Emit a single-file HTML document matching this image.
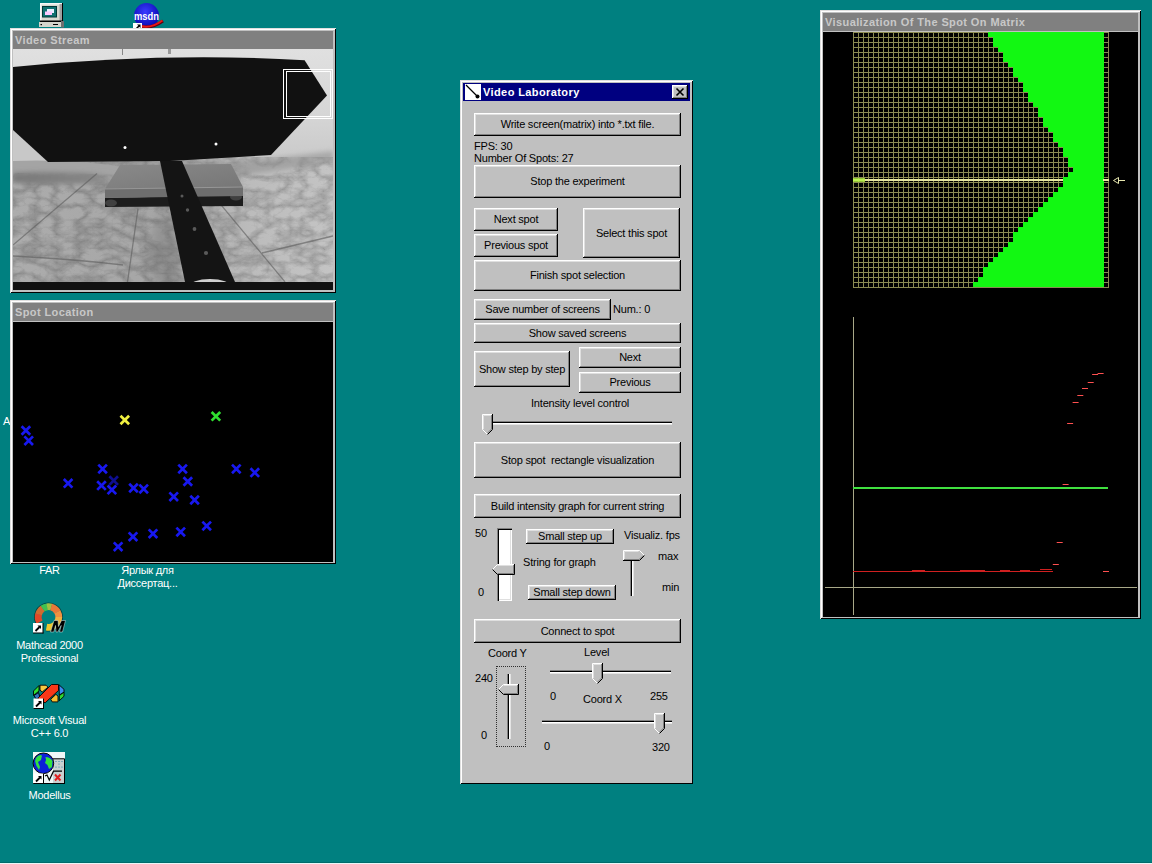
<!DOCTYPE html><html><head><meta charset="utf-8"><style>
*{box-sizing:border-box}
html,body{margin:0;padding:0}
body{width:1152px;height:864px;background:#008080;position:relative;overflow:hidden;font-family:"Liberation Sans",sans-serif;font-size:11px;color:#000}
.a{position:absolute}
.win{position:absolute;background:#c0c0c0;box-shadow:inset 1px 1px #dfdfdf,inset -1px -1px #000,inset 2px 2px #fff,inset -2px -2px #c0c0c0}
.tb{position:absolute;height:18px;background:#808080;color:#c8c8c8;font-weight:bold;font-size:11px;line-height:18px;padding-left:2px;white-space:nowrap;letter-spacing:0.4px}
.tba{background:#000080;color:#fff}
.btn{position:absolute;background:#c0c0c0;box-shadow:inset -1px -1px #000,inset 1px 1px #fff,inset -2px -2px #808080,inset 2px 2px #dfdfdf;text-align:center;white-space:nowrap;font-size:11px;letter-spacing:-0.22px}
.t{position:absolute;white-space:nowrap;font-size:11px;line-height:13px;letter-spacing:-0.2px}
.dl{position:absolute;color:#fff;font-size:11px;line-height:13px;text-align:center;white-space:nowrap;letter-spacing:-0.25px}
</style></head><body>
<svg class="a" style="left:34px;top:0px" width="36" height="30" viewBox="0 0 36 30">
<rect x="6" y="3" width="22" height="18" fill="#d8d8d0"/>
<rect x="6" y="3" width="22" height="1.5" fill="#f8f8f8"/>
<rect x="6" y="3" width="1.5" height="18" fill="#f8f8f8"/>
<rect x="25.5" y="4" width="2.5" height="17" fill="#a0a0a0"/>
<rect x="28" y="3" width="1" height="19" fill="#000"/>
<rect x="8" y="6" width="15" height="11.5" fill="#003838"/>
<rect x="9" y="7" width="13" height="9.5" fill="#107070"/>
<rect x="13" y="9" width="7" height="4" fill="#e8f0ff"/>
<rect x="11" y="11.5" width="7" height="3.5" fill="#ffc8ff"/>
<rect x="6" y="20.5" width="23" height="1.5" fill="#000"/>
<rect x="5" y="22" width="24" height="5" fill="#d4d4cc"/>
<rect x="27" y="21" width="3" height="6.5" fill="#707070"/>
<rect x="6.5" y="24" width="1.5" height="1.2" fill="#000"/>
<rect x="19" y="24" width="5" height="1" fill="#000"/>
</svg>
<svg class="a" style="left:130px;top:0px" width="36" height="30" viewBox="0 0 36 30">
<defs><radialGradient id="msg" cx="0.45" cy="0.35" r="0.65"><stop offset="0" stop-color="#3a3aff"/><stop offset="1" stop-color="#0808b0"/></radialGradient></defs>
<circle cx="16.5" cy="15.5" r="12.5" fill="url(#msg)"/>
<path d="M9 26 Q20 30 33 21" stroke="#600010" stroke-width="3.2" fill="none"/>
<path d="M9 25.5 Q20 29.5 32.5 20.5" stroke="#e81818" stroke-width="2" fill="none"/>
<text x="16.5" y="19.5" text-anchor="middle" font-family="Liberation Sans" font-weight="bold" font-size="11.5" fill="#fff" textLength="25" lengthAdjust="spacingAndGlyphs">msdn</text>
<rect x="3" y="23" width="9" height="7" fill="#fff"/>
<path d="M5.5 29.5 L9 26" stroke="#000" stroke-width="1.6"/><path d="M7 24.5 L10.5 24.5 L10.5 28 Z" fill="#000"/>
</svg>
<div class="t" style="left:3px;top:415px;"><span style="color:#fff">A</span></div>
<div class="dl" style="left:-10.5px;width:120px;top:564px">FAR</div>
<div class="dl" style="left:87.5px;width:120px;top:564px">Ярлык для</div>
<div class="dl" style="left:87.5px;width:120px;top:577px">Диссертац...</div>
<svg class="a" style="left:30px;top:600px" width="38" height="36" viewBox="0 0 38 36"><path d="M7.85 25.93 A13.9 13.9 0 1 1 16.09 30.69" stroke="#004848" stroke-width="1.2" fill="none"/><path d="M9.58 22.15 A10.3 10.3 0 0 1 8.60 14.16" stroke="#e04828" stroke-width="6.8" fill="none"/><path d="M8.55 14.33 A10.3 10.3 0 0 1 12.74 8.46" stroke="#d06a30" stroke-width="6.8" fill="none"/><path d="M12.59 8.56 A10.3 10.3 0 0 1 17.24 6.78" stroke="#40c050" stroke-width="6.8" fill="none"/><path d="M17.07 6.80 A10.3 10.3 0 0 1 21.34 7.10" stroke="#a0c040" stroke-width="6.8" fill="none"/><path d="M21.17 7.05 A10.3 10.3 0 0 1 27.51 12.01" stroke="#e87838" stroke-width="6.8" fill="none"/><path d="M27.42 11.85 A10.3 10.3 0 0 1 28.80 17.18" stroke="#f09040" stroke-width="6.8" fill="none"/><path d="M28.80 17.00 A10.3 10.3 0 0 1 27.33 22.30" stroke="#f0b040" stroke-width="6.8" fill="none"/><path d="M27.42 22.15 A10.3 10.3 0 0 1 16.53 27.11" stroke="#f0c830" stroke-width="6.8" fill="none"/><path d="M20.5 32 L24 20.5 L28 20.5 L28.5 26.5 L31.5 20.5 L35.5 20.5 L32.5 32 L29.5 32 L31.2 25.5 L27.8 32 L26 32 L25.5 25.5 L23.8 32 Z" fill="#000" stroke="#d8f0f0" stroke-width="0.5"/><rect x="3" y="23" width="10" height="10" fill="#fff"/><rect x="3" y="32.5" width="10.5" height="1" fill="#000"/><rect x="12.5" y="23" width="1" height="10.5" fill="#000"/>
<path d="M5.5 31 L9.5 27" stroke="#000" stroke-width="1.8"/><path d="M7.5 25.5 L11 25.5 L11 29 Z" fill="#000"/></svg>
<div class="dl" style="left:-10.5px;width:120px;top:639px">Mathcad 2000</div>
<div class="dl" style="left:-10.5px;width:120px;top:652px">Professional</div>
<svg class="a" style="left:30px;top:680px" width="38" height="32" viewBox="0 0 38 32">
<g stroke="#000" stroke-width="0.9" stroke-linejoin="round">
<path d="M3.5 11 L9 5.5 L9 11 L3.5 15.5 Z" fill="#30e030"/>
<path d="M10 5.2 L16 5.2 L18 7.2 L12.2 12 L10 10 Z" fill="#f8c840"/>
<path d="M29 4.8 L34 9.3 L34 12.2 L29.3 15 Z" fill="#3c8cf0"/>
<path d="M29.3 15.6 L34 12.2 L34 16.3 L29.3 20.7 Z" fill="#30d830"/>
<path d="M20.7 19.3 L25.9 14.4 L28 16 L28 21.9 L22.2 21.9 Z" fill="#f8c030"/>
<path d="M4 15.5 L8.5 12.5 L10 17.5 L6 19 Z" fill="#3070c0"/>
<path d="M8.5 17.5 L21.5 4.5 L28.5 4.5 L28.5 10.5 L15.5 22.5 L9 22.5 Z" fill="#f83818"/>
</g>
<rect x="3.5" y="18.5" width="10" height="10" fill="#fff"/><rect x="3.5" y="28.0" width="10.5" height="1" fill="#000"/><rect x="13.0" y="18.5" width="1" height="10.5" fill="#000"/>
<path d="M6.0 26.5 L10.0 22.5" stroke="#000" stroke-width="1.8"/><path d="M8.0 21.0 L11.5 21.0 L11.5 24.5 Z" fill="#000"/>
</svg>
<div class="dl" style="left:-10.5px;width:120px;top:714px">Microsoft Visual</div>
<div class="dl" style="left:-10.5px;width:120px;top:727px">C++ 6.0</div>
<svg class="a" style="left:30px;top:748px" width="38" height="40" viewBox="0 0 38 40">
<rect x="3" y="4" width="32" height="31.5" fill="#f0f8f8"/>
<rect x="23" y="10.5" width="11.5" height="25" fill="#c8d0d0"/>
<path d="M23 10.8 H34.5 V35.5" stroke="#000" stroke-width="1" fill="none"/>
<g fill="#2080a0"><circle cx="26" cy="13.5" r="0.6"/><circle cx="29" cy="13.5" r="0.6"/><circle cx="32" cy="13.5" r="0.6"/><circle cx="26" cy="19" r="0.6"/><circle cx="29" cy="19" r="0.6"/><circle cx="32" cy="19" r="0.6"/><circle cx="29" cy="16" r="0.6"/></g>
<circle cx="13.4" cy="15.3" r="10.3" fill="#0c20d8" stroke="#000" stroke-width="1"/>
<path d="M6 10 Q9 6 12 7.5 L11 12 L8 14 L10 19 L9 22 L6.5 18 L5 13 Z" fill="#30e040"/>
<path d="M15.5 9 Q20 9 22.5 13 L22 19 L19 21 L17.5 17 L15 15 L16 12 Z" fill="#30e040"/>
<path d="M15 28 L17 27 L19.3 32 L23.5 23.2 H32" stroke="#000" stroke-width="1.2" fill="none"/>
<path d="M25 26.5 L30.5 32.5 M30.5 26.5 L25 32.5" stroke="#e02020" stroke-width="2"/>
<rect x="3" y="35" width="32" height="1" fill="#000"/>
<rect x="3.5" y="25.5" width="10" height="10" fill="#fff"/><rect x="3.5" y="35.0" width="10.5" height="1" fill="#000"/><rect x="13.0" y="25.5" width="1" height="10.5" fill="#000"/>
<path d="M6.0 33.5 L10.0 29.5" stroke="#000" stroke-width="1.8"/><path d="M8.0 28.0 L11.5 28.0 L11.5 31.5 Z" fill="#000"/>
</svg>
<div class="dl" style="left:-10.5px;width:120px;top:789px">Modellus</div>
<div class="win" style="left:10px;top:28px;width:326px;height:265px"></div>
<div class="tb" style="left:13px;top:31px;width:320px">Video Stream</div>
<svg class="a" style="left:13px;top:49px" width="320" height="241" viewBox="0 0 320 241">
<defs>
<linearGradient id="fl" x1="0" y1="0" x2="1" y2="0">
<stop offset="0" stop-color="#acacac"/><stop offset="0.45" stop-color="#a6a6a6"/><stop offset="0.75" stop-color="#bcbcbc"/><stop offset="1" stop-color="#c4c4c4"/>
</linearGradient>
<linearGradient id="cr" x1="0" y1="0" x2="0" y2="1">
<stop offset="0" stop-color="#e0e0e0"/><stop offset="0.6" stop-color="#d6d6d6"/><stop offset="1" stop-color="#cacaca"/>
</linearGradient>
<linearGradient id="bx" x1="0" y1="0" x2="1" y2="1">
<stop offset="0" stop-color="#8a8a8a"/><stop offset="1" stop-color="#767676"/>
</linearGradient>
<linearGradient id="sh" x1="0" y1="0" x2="1" y2="0">
<stop offset="0" stop-color="#7a7a7a"/><stop offset="0.7" stop-color="#858585"/><stop offset="1" stop-color="#999" stop-opacity="0"/>
</linearGradient>
<filter id="tx" x="0" y="0" width="100%" height="100%">
<feTurbulence type="turbulence" baseFrequency="0.045 0.07" numOctaves="4" seed="11" result="t"/>
<feColorMatrix in="t" type="matrix" values="0 0 0 0 0  0 0 0 0 0  0 0 0 0 0  -1.4 0 0 0 0.75"/>
</filter>
<filter id="bl" x="-50%" y="-50%" width="200%" height="200%"><feGaussianBlur stdDeviation="5"/></filter>
<filter id="bl2" x="-20%" y="-50%" width="140%" height="200%"><feGaussianBlur stdDeviation="2.5"/></filter>
</defs>
<rect width="320" height="241" fill="url(#fl)"/>
<rect y="100" width="320" height="133" filter="url(#tx)" opacity="0.28"/>
<rect y="0" width="320" height="108" fill="url(#cr)"/>
<path d="M0 75 L40 110 L0 122 Z" fill="#c8c8c8"/>
<path d="M0 112 Q60 110 110 118 L110 126 Q60 124 0 124 Z" fill="#a4a4a4"/>
<path d="M0 124 Q50 121 100 126 L110 134 Q50 136 0 134 Z" fill="url(#sh)" filter="url(#bl2)"/>
<path d="M190 116 Q260 110 320 102 L320 112 Q260 124 200 128 Z" fill="#8c8c8c" opacity="0.55" filter="url(#bl2)"/>
<path d="M0 18 Q150 3 291.6 11.2 L314 46.6 L258 106 L157 112 L35 113 L0 81 Z" fill="#111"/>
<circle cx="112" cy="98.5" r="1.5" fill="#fff"/>
<circle cx="203" cy="95" r="1.5" fill="#fff"/>
<rect x="109" y="0" width="1" height="6" fill="#888"/>
<rect x="155" y="0" width="3" height="5" fill="#999"/>
<path d="M0 196 L84 124.5 M114.5 233 L125 159.7 M207.6 155.4 L272 232.8 M249 204 L320 187 M0 207 Q60 210 110 216" stroke="#5c5c5c" stroke-width="1.3" fill="none" opacity="0.6"/>
<ellipse cx="152" cy="205" rx="14" ry="40" fill="#707070" opacity="0.35" filter="url(#bl)"/>
<path d="M92 149 L230 146 L230 157 L92 158 Z" fill="#1c1c1c"/>
<ellipse cx="98" cy="154" rx="6" ry="3.5" fill="#404040"/>
<ellipse cx="223" cy="148" rx="6" ry="3.5" fill="#404040"/>
<path d="M107 116 L218 115 L230 138 L92 140 Z" fill="url(#bx)"/>
<path d="M92 140 L230 138 L230 147 L92 149 Z" fill="#6e6e6e"/>
<path d="M92 140 L230 138" stroke="#9c9c9c" stroke-width="0.8"/>
<path d="M147 112 L169 112 L222 233 L172 233 Z" fill="#141414"/>
<circle cx="169" cy="147" r="1.5" fill="#5a5a5a"/>
<circle cx="174.5" cy="161" r="1.7" fill="#5a5a5a"/>
<circle cx="181.5" cy="180" r="1.9" fill="#5a5a5a"/>
<circle cx="193" cy="204" r="2.1" fill="#5a5a5a"/>
<ellipse cx="197" cy="238" rx="21" ry="8" fill="#d0d0d0"/>
<rect y="233" width="320" height="8" fill="#111"/>
<g fill="#fff"><rect x="270" y="20" width="50" height="1"/><rect x="270" y="69" width="50" height="1"/><rect x="270" y="20" width="1" height="50"/><rect x="319" y="20" width="1" height="50"/><rect x="273" y="22" width="45" height="1"/><rect x="273" y="67" width="45" height="1"/><rect x="273" y="22" width="1" height="46"/><rect x="317" y="22" width="1" height="46"/></g>
</svg>
<div class="win" style="left:10px;top:300px;width:326px;height:264px"></div>
<div class="tb" style="left:13px;top:303px;width:320px">Spot Location</div>
<div class="a" style="left:13px;top:322px;width:320px;height:240px;background:#000"></div>
<svg class="a" style="left:0px;top:0px" width="340" height="570"><path d="M21.599999999999998 426.2 L30.2 434.8 M30.2 426.2 L21.599999999999998 434.8" stroke="#1818f0" stroke-width="2.7" opacity="1"/><path d="M24.4 436.4 L33.0 445.0 M33.0 436.4 L24.4 445.0" stroke="#1818f0" stroke-width="2.7" opacity="1"/><path d="M63.8 479.0 L72.39999999999999 487.6 M72.39999999999999 479.0 L63.8 487.6" stroke="#1818f0" stroke-width="2.7" opacity="1"/><path d="M98.3 464.59999999999997 L106.89999999999999 473.2 M106.89999999999999 464.59999999999997 L98.3 473.2" stroke="#1818f0" stroke-width="2.7" opacity="1"/><path d="M97.2 481.3 L105.8 489.90000000000003 M105.8 481.3 L97.2 489.90000000000003" stroke="#1818f0" stroke-width="2.7" opacity="1"/><path d="M109.4 476.3 L118.0 484.90000000000003 M118.0 476.3 L109.4 484.90000000000003" stroke="#1818f0" stroke-width="2.7" opacity="0.6"/><path d="M107.60000000000001 485.5 L116.2 494.1 M116.2 485.5 L107.60000000000001 494.1" stroke="#1818f0" stroke-width="2.7" opacity="1"/><path d="M129.2 483.7 L137.8 492.3 M137.8 483.7 L129.2 492.3" stroke="#1818f0" stroke-width="2.7" opacity="1"/><path d="M139.39999999999998 484.59999999999997 L148.0 493.2 M148.0 484.59999999999997 L139.39999999999998 493.2" stroke="#1818f0" stroke-width="2.7" opacity="1"/><path d="M178.29999999999998 464.59999999999997 L186.9 473.2 M186.9 464.59999999999997 L178.29999999999998 473.2" stroke="#1818f0" stroke-width="2.7" opacity="1"/><path d="M183.5 477.2 L192.10000000000002 485.8 M192.10000000000002 477.2 L183.5 485.8" stroke="#1818f0" stroke-width="2.7" opacity="1"/><path d="M169.39999999999998 492.4 L178.0 501.0 M178.0 492.4 L169.39999999999998 501.0" stroke="#1818f0" stroke-width="2.7" opacity="1"/><path d="M190.29999999999998 495.7 L198.9 504.3 M198.9 495.7 L190.29999999999998 504.3" stroke="#1818f0" stroke-width="2.7" opacity="1"/><path d="M232.0 464.59999999999997 L240.60000000000002 473.2 M240.60000000000002 464.59999999999997 L232.0 473.2" stroke="#1818f0" stroke-width="2.7" opacity="1"/><path d="M250.5 468.3 L259.1 476.90000000000003 M259.1 468.3 L250.5 476.90000000000003" stroke="#1818f0" stroke-width="2.7" opacity="1"/><path d="M202.39999999999998 521.6 L211.0 530.1999999999999 M211.0 521.6 L202.39999999999998 530.1999999999999" stroke="#1818f0" stroke-width="2.7" opacity="1"/><path d="M176.39999999999998 527.6 L185.0 536.1999999999999 M185.0 527.6 L176.39999999999998 536.1999999999999" stroke="#1818f0" stroke-width="2.7" opacity="1"/><path d="M148.7 529.4000000000001 L157.3 538.0 M157.3 529.4000000000001 L148.7 538.0" stroke="#1818f0" stroke-width="2.7" opacity="1"/><path d="M128.7 532.4000000000001 L137.3 541.0 M137.3 532.4000000000001 L128.7 541.0" stroke="#1818f0" stroke-width="2.7" opacity="1"/><path d="M113.8 542.4000000000001 L122.39999999999999 551.0 M122.39999999999999 542.4000000000001 L113.8 551.0" stroke="#1818f0" stroke-width="2.7" opacity="1"/><path d="M120.5 415.7 L129.1 424.3 M129.1 415.7 L120.5 424.3" stroke="#f0f040" stroke-width="2.7" opacity="1"/><path d="M211.6 412.0 L220.20000000000002 420.6 M220.20000000000002 412.0 L211.6 420.6" stroke="#30e030" stroke-width="2.7" opacity="1"/></svg>
<div class="win" style="left:820px;top:10px;width:321px;height:609px"></div>
<div class="tb" style="left:823px;top:13px;width:315px">Visualization Of The Spot On Matrix</div>
<div class="a" style="left:823px;top:32px;width:315px;height:585px;background:#000"></div>
<svg class="a" style="left:823px;top:32px" width="315" height="585" viewBox="823 32 315 585"><line x1="853.5" y1="32" x2="853.5" y2="288" stroke="#8a8a52" stroke-width="1"/><line x1="858.5" y1="32" x2="858.5" y2="288" stroke="#8a8a52" stroke-width="1"/><line x1="863.5" y1="32" x2="863.5" y2="288" stroke="#8a8a52" stroke-width="1"/><line x1="868.5" y1="32" x2="868.5" y2="288" stroke="#8a8a52" stroke-width="1"/><line x1="873.5" y1="32" x2="873.5" y2="288" stroke="#8a8a52" stroke-width="1"/><line x1="878.5" y1="32" x2="878.5" y2="288" stroke="#8a8a52" stroke-width="1"/><line x1="883.5" y1="32" x2="883.5" y2="288" stroke="#8a8a52" stroke-width="1"/><line x1="888.5" y1="32" x2="888.5" y2="288" stroke="#8a8a52" stroke-width="1"/><line x1="893.5" y1="32" x2="893.5" y2="288" stroke="#8a8a52" stroke-width="1"/><line x1="898.5" y1="32" x2="898.5" y2="288" stroke="#8a8a52" stroke-width="1"/><line x1="903.5" y1="32" x2="903.5" y2="288" stroke="#8a8a52" stroke-width="1"/><line x1="908.5" y1="32" x2="908.5" y2="288" stroke="#8a8a52" stroke-width="1"/><line x1="913.5" y1="32" x2="913.5" y2="288" stroke="#8a8a52" stroke-width="1"/><line x1="918.5" y1="32" x2="918.5" y2="288" stroke="#8a8a52" stroke-width="1"/><line x1="923.5" y1="32" x2="923.5" y2="288" stroke="#8a8a52" stroke-width="1"/><line x1="928.5" y1="32" x2="928.5" y2="288" stroke="#8a8a52" stroke-width="1"/><line x1="933.5" y1="32" x2="933.5" y2="288" stroke="#8a8a52" stroke-width="1"/><line x1="938.5" y1="32" x2="938.5" y2="288" stroke="#8a8a52" stroke-width="1"/><line x1="943.5" y1="32" x2="943.5" y2="288" stroke="#8a8a52" stroke-width="1"/><line x1="948.5" y1="32" x2="948.5" y2="288" stroke="#8a8a52" stroke-width="1"/><line x1="953.5" y1="32" x2="953.5" y2="288" stroke="#8a8a52" stroke-width="1"/><line x1="958.5" y1="32" x2="958.5" y2="288" stroke="#8a8a52" stroke-width="1"/><line x1="963.5" y1="32" x2="963.5" y2="288" stroke="#8a8a52" stroke-width="1"/><line x1="968.5" y1="32" x2="968.5" y2="288" stroke="#8a8a52" stroke-width="1"/><line x1="973.5" y1="32" x2="973.5" y2="288" stroke="#8a8a52" stroke-width="1"/><line x1="978.5" y1="32" x2="978.5" y2="288" stroke="#8a8a52" stroke-width="1"/><line x1="983.5" y1="32" x2="983.5" y2="288" stroke="#8a8a52" stroke-width="1"/><line x1="988.5" y1="32" x2="988.5" y2="288" stroke="#8a8a52" stroke-width="1"/><line x1="993.5" y1="32" x2="993.5" y2="288" stroke="#8a8a52" stroke-width="1"/><line x1="998.5" y1="32" x2="998.5" y2="288" stroke="#8a8a52" stroke-width="1"/><line x1="1003.5" y1="32" x2="1003.5" y2="288" stroke="#8a8a52" stroke-width="1"/><line x1="1008.5" y1="32" x2="1008.5" y2="288" stroke="#8a8a52" stroke-width="1"/><line x1="1013.5" y1="32" x2="1013.5" y2="288" stroke="#8a8a52" stroke-width="1"/><line x1="1018.5" y1="32" x2="1018.5" y2="288" stroke="#8a8a52" stroke-width="1"/><line x1="1023.5" y1="32" x2="1023.5" y2="288" stroke="#8a8a52" stroke-width="1"/><line x1="1028.5" y1="32" x2="1028.5" y2="288" stroke="#8a8a52" stroke-width="1"/><line x1="1033.5" y1="32" x2="1033.5" y2="288" stroke="#8a8a52" stroke-width="1"/><line x1="1038.5" y1="32" x2="1038.5" y2="288" stroke="#8a8a52" stroke-width="1"/><line x1="1043.5" y1="32" x2="1043.5" y2="288" stroke="#8a8a52" stroke-width="1"/><line x1="1048.5" y1="32" x2="1048.5" y2="288" stroke="#8a8a52" stroke-width="1"/><line x1="1053.5" y1="32" x2="1053.5" y2="288" stroke="#8a8a52" stroke-width="1"/><line x1="1058.5" y1="32" x2="1058.5" y2="288" stroke="#8a8a52" stroke-width="1"/><line x1="1063.5" y1="32" x2="1063.5" y2="288" stroke="#8a8a52" stroke-width="1"/><line x1="1068.5" y1="32" x2="1068.5" y2="288" stroke="#8a8a52" stroke-width="1"/><line x1="1073.5" y1="32" x2="1073.5" y2="288" stroke="#8a8a52" stroke-width="1"/><line x1="1078.5" y1="32" x2="1078.5" y2="288" stroke="#8a8a52" stroke-width="1"/><line x1="1083.5" y1="32" x2="1083.5" y2="288" stroke="#8a8a52" stroke-width="1"/><line x1="1088.5" y1="32" x2="1088.5" y2="288" stroke="#8a8a52" stroke-width="1"/><line x1="1093.5" y1="32" x2="1093.5" y2="288" stroke="#8a8a52" stroke-width="1"/><line x1="1098.5" y1="32" x2="1098.5" y2="288" stroke="#8a8a52" stroke-width="1"/><line x1="1103.5" y1="32" x2="1103.5" y2="288" stroke="#8a8a52" stroke-width="1"/><line x1="1108.5" y1="32" x2="1108.5" y2="288" stroke="#8a8a52" stroke-width="1"/><line x1="853" y1="32.5" x2="1109" y2="32.5" stroke="#8a8a52" stroke-width="1"/><line x1="853" y1="37.5" x2="1109" y2="37.5" stroke="#8a8a52" stroke-width="1"/><line x1="853" y1="42.5" x2="1109" y2="42.5" stroke="#8a8a52" stroke-width="1"/><line x1="853" y1="47.5" x2="1109" y2="47.5" stroke="#8a8a52" stroke-width="1"/><line x1="853" y1="52.5" x2="1109" y2="52.5" stroke="#8a8a52" stroke-width="1"/><line x1="853" y1="57.5" x2="1109" y2="57.5" stroke="#8a8a52" stroke-width="1"/><line x1="853" y1="62.5" x2="1109" y2="62.5" stroke="#8a8a52" stroke-width="1"/><line x1="853" y1="67.5" x2="1109" y2="67.5" stroke="#8a8a52" stroke-width="1"/><line x1="853" y1="72.5" x2="1109" y2="72.5" stroke="#8a8a52" stroke-width="1"/><line x1="853" y1="77.5" x2="1109" y2="77.5" stroke="#8a8a52" stroke-width="1"/><line x1="853" y1="82.5" x2="1109" y2="82.5" stroke="#8a8a52" stroke-width="1"/><line x1="853" y1="87.5" x2="1109" y2="87.5" stroke="#8a8a52" stroke-width="1"/><line x1="853" y1="92.5" x2="1109" y2="92.5" stroke="#8a8a52" stroke-width="1"/><line x1="853" y1="97.5" x2="1109" y2="97.5" stroke="#8a8a52" stroke-width="1"/><line x1="853" y1="102.5" x2="1109" y2="102.5" stroke="#8a8a52" stroke-width="1"/><line x1="853" y1="107.5" x2="1109" y2="107.5" stroke="#8a8a52" stroke-width="1"/><line x1="853" y1="112.5" x2="1109" y2="112.5" stroke="#8a8a52" stroke-width="1"/><line x1="853" y1="117.5" x2="1109" y2="117.5" stroke="#8a8a52" stroke-width="1"/><line x1="853" y1="122.5" x2="1109" y2="122.5" stroke="#8a8a52" stroke-width="1"/><line x1="853" y1="127.5" x2="1109" y2="127.5" stroke="#8a8a52" stroke-width="1"/><line x1="853" y1="132.5" x2="1109" y2="132.5" stroke="#8a8a52" stroke-width="1"/><line x1="853" y1="137.5" x2="1109" y2="137.5" stroke="#8a8a52" stroke-width="1"/><line x1="853" y1="142.5" x2="1109" y2="142.5" stroke="#8a8a52" stroke-width="1"/><line x1="853" y1="147.5" x2="1109" y2="147.5" stroke="#8a8a52" stroke-width="1"/><line x1="853" y1="152.5" x2="1109" y2="152.5" stroke="#8a8a52" stroke-width="1"/><line x1="853" y1="157.5" x2="1109" y2="157.5" stroke="#8a8a52" stroke-width="1"/><line x1="853" y1="162.5" x2="1109" y2="162.5" stroke="#8a8a52" stroke-width="1"/><line x1="853" y1="167.5" x2="1109" y2="167.5" stroke="#8a8a52" stroke-width="1"/><line x1="853" y1="172.5" x2="1109" y2="172.5" stroke="#8a8a52" stroke-width="1"/><line x1="853" y1="177.5" x2="1109" y2="177.5" stroke="#8a8a52" stroke-width="1"/><line x1="853" y1="182.5" x2="1109" y2="182.5" stroke="#8a8a52" stroke-width="1"/><line x1="853" y1="187.5" x2="1109" y2="187.5" stroke="#8a8a52" stroke-width="1"/><line x1="853" y1="192.5" x2="1109" y2="192.5" stroke="#8a8a52" stroke-width="1"/><line x1="853" y1="197.5" x2="1109" y2="197.5" stroke="#8a8a52" stroke-width="1"/><line x1="853" y1="202.5" x2="1109" y2="202.5" stroke="#8a8a52" stroke-width="1"/><line x1="853" y1="207.5" x2="1109" y2="207.5" stroke="#8a8a52" stroke-width="1"/><line x1="853" y1="212.5" x2="1109" y2="212.5" stroke="#8a8a52" stroke-width="1"/><line x1="853" y1="217.5" x2="1109" y2="217.5" stroke="#8a8a52" stroke-width="1"/><line x1="853" y1="222.5" x2="1109" y2="222.5" stroke="#8a8a52" stroke-width="1"/><line x1="853" y1="227.5" x2="1109" y2="227.5" stroke="#8a8a52" stroke-width="1"/><line x1="853" y1="232.5" x2="1109" y2="232.5" stroke="#8a8a52" stroke-width="1"/><line x1="853" y1="237.5" x2="1109" y2="237.5" stroke="#8a8a52" stroke-width="1"/><line x1="853" y1="242.5" x2="1109" y2="242.5" stroke="#8a8a52" stroke-width="1"/><line x1="853" y1="247.5" x2="1109" y2="247.5" stroke="#8a8a52" stroke-width="1"/><line x1="853" y1="252.5" x2="1109" y2="252.5" stroke="#8a8a52" stroke-width="1"/><line x1="853" y1="257.5" x2="1109" y2="257.5" stroke="#8a8a52" stroke-width="1"/><line x1="853" y1="262.5" x2="1109" y2="262.5" stroke="#8a8a52" stroke-width="1"/><line x1="853" y1="267.5" x2="1109" y2="267.5" stroke="#8a8a52" stroke-width="1"/><line x1="853" y1="272.5" x2="1109" y2="272.5" stroke="#8a8a52" stroke-width="1"/><line x1="853" y1="277.5" x2="1109" y2="277.5" stroke="#8a8a52" stroke-width="1"/><line x1="853" y1="282.5" x2="1109" y2="282.5" stroke="#8a8a52" stroke-width="1"/><line x1="853" y1="287.5" x2="1109" y2="287.5" stroke="#8a8a52" stroke-width="1"/><path d="M988 32h116v5h-116zM993 37h111v5h-111zM993 42h111v5h-111zM998 47h106v5h-106zM1003 52h101v5h-101zM1003 57h101v5h-101zM1008 62h96v5h-96zM1013 67h91v5h-91zM1013 72h91v5h-91zM1018 77h86v5h-86zM1023 82h81v5h-81zM1023 87h81v5h-81zM1028 92h76v5h-76zM1028 97h76v5h-76zM1033 102h71v5h-71zM1038 107h66v5h-66zM1038 112h66v5h-66zM1043 117h61v5h-61zM1043 122h61v5h-61zM1048 127h56v5h-56zM1053 132h51v5h-51zM1053 137h51v5h-51zM1058 142h46v5h-46zM1063 147h41v5h-41zM1063 152h41v5h-41zM1068 157h36v5h-36zM1068 162h36v5h-36zM1073 167h31v5h-31zM1068 172h36v5h-36zM1063 177h41v5h-41zM1063 182h41v5h-41zM1058 187h46v5h-46zM1053 192h51v5h-51zM1048 197h56v5h-56zM1043 202h61v5h-61zM1038 207h66v5h-66zM1033 212h71v5h-71zM1028 217h76v5h-76zM1023 222h81v5h-81zM1018 227h86v5h-86zM1013 232h91v5h-91zM1013 237h91v5h-91zM1008 242h96v5h-96zM1003 247h101v5h-101zM998 252h106v5h-106zM993 257h111v5h-111zM988 262h116v5h-116zM983 267h121v5h-121zM983 272h121v5h-121zM978 277h126v5h-126zM973 282h131v5h-131z" fill="#12f812"/><rect x="853" y="179" width="210" height="2" fill="#e8e8a0"/><rect x="853" y="178" width="12" height="4" fill="#b0f040" opacity="0.8"/><rect x="1103" y="179" width="6" height="2" fill="#e8e8a0"/><path d="M1113.5 180.5 L1118.5 177.5 L1118.5 183.5 Z M1118.5 180.5 H1125" stroke="#e8e8b0" stroke-width="1" fill="none"/><rect x="853" y="317" width="1" height="298" fill="#a8a888"/><rect x="825" y="587" width="312" height="1" fill="#a8a888"/><rect x="853" y="487" width="255" height="2" fill="#40e040"/><path d="M853 571.5 H1053" stroke="#d02020" stroke-width="1"/><rect x="912" y="570" width="13" height="1" fill="#d02020"/><rect x="960" y="570" width="25" height="1" fill="#d02020"/><rect x="1000" y="570" width="10" height="1" fill="#d02020"/><rect x="1020" y="570" width="10" height="1" fill="#d02020"/><rect x="1040" y="569" width="12" height="1" fill="#d02020"/><rect x="1052.8" y="564" width="6" height="1" fill="#ff5050"/><rect x="1056.7" y="542" width="6" height="1" fill="#ff5050"/><rect x="1062.6" y="484" width="6" height="1" fill="#ff5050"/><rect x="1067.1" y="423" width="6" height="1" fill="#ff5050"/><rect x="1072.6" y="402" width="6" height="1" fill="#ff5050"/><rect x="1077.3" y="395" width="6" height="1" fill="#ff5050"/><rect x="1082" y="388" width="6" height="1" fill="#ff5050"/><rect x="1087.7" y="382" width="6" height="1" fill="#ff5050"/><rect x="1092.1" y="374" width="6" height="1" fill="#ff5050"/><rect x="1097.6" y="373" width="6" height="1" fill="#ff5050"/><rect x="1103" y="571" width="6" height="1" fill="#ff5050"/></svg>
<div class="win" style="left:460px;top:80px;width:233px;height:704px"></div>
<div class="tb tba" style="left:463px;top:83px;width:227px;padding-left:20px">Video Laboratory</div>
<svg class="a" style="left:465px;top:84px" width="16" height="16" viewBox="0 0 16 16">
<rect width="16" height="16" fill="#fff"/><path d="M1 1 L12 12" stroke="#000" stroke-width="1.3"/><circle cx="12.5" cy="12.5" r="2" fill="#000"/>
</svg>
<div class="btn" style="left:672px;top:85px;width:16px;height:14px"></div>
<svg class="a" style="left:672px;top:85px" width="16" height="14" viewBox="0 0 16 14"><path d="M4.5 3.5 L11.5 10.5 M11.5 3.5 L4.5 10.5" stroke="#000" stroke-width="1.6"/></svg>
<div class="btn" style="left:474px;top:113px;width:207px;height:23px;line-height:23px">Write screen(matrix) into *.txt file.</div>
<div class="t" style="left:474px;top:140px;">FPS: 30</div>
<div class="t" style="left:474px;top:152px;">Number Of Spots: 27</div>
<div class="btn" style="left:474px;top:165px;width:207px;height:33px;line-height:33px">Stop the experiment</div>
<div class="btn" style="left:474px;top:208px;width:84px;height:23px;line-height:23px">Next spot</div>
<div class="btn" style="left:474px;top:234px;width:84px;height:23px;line-height:23px">Previous spot</div>
<div class="btn" style="left:583px;top:208px;width:97px;height:50px;line-height:50px">Select this spot</div>
<div class="btn" style="left:474px;top:260px;width:207px;height:31px;line-height:31px">Finish spot selection</div>
<div class="btn" style="left:474px;top:299px;width:137px;height:21px;line-height:21px">Save number of screens</div>
<div class="t" style="left:613px;top:303px;">Num.: 0</div>
<div class="btn" style="left:474px;top:323px;width:207px;height:20px;line-height:20px">Show saved screens</div>
<div class="btn" style="left:474px;top:351px;width:96px;height:36px;line-height:36px">Show step by step</div>
<div class="btn" style="left:579px;top:347px;width:102px;height:21px;line-height:21px">Next</div>
<div class="btn" style="left:579px;top:372px;width:102px;height:21px;line-height:21px">Previous</div>
<div class="t" style="left:531px;top:397px;">Intensity level control</div>
<div class="a" style="left:482px;top:421px;width:190px;height:4px;background:linear-gradient(#808080 0 1px,#000 1px 2px,#fff 2px 3px,#e4e4e4 3px 4px)"></div>
<svg class="a" style="left:482px;top:414px" width="11" height="21" viewBox="0 0 11 21">
<path d="M0 0 H11 V15.5 L5.5 21 L0 15.5 Z" fill="#c0c0c0"/>
<path d="M0.5 15.5 V0.5 H10" stroke="#fff" stroke-width="1" fill="none"/>
<path d="M1.5 15.0 V1.5 H9" stroke="#dfdfdf" stroke-width="1" fill="none"/>
<path d="M0.5 15.5 L5.5 20.5" stroke="#fff" stroke-width="1" fill="none"/>
<path d="M9.5 1 V15.0 L5.5 19" stroke="#808080" stroke-width="1" fill="none"/>
<path d="M10.5 0 V15.5 L5.5 20.5" stroke="#000" stroke-width="1" fill="none"/>
</svg>
<div class="btn" style="left:474px;top:442px;width:207px;height:36px;line-height:36px">Stop spot&nbsp; rectangle visualization</div>
<div class="btn" style="left:474px;top:494px;width:207px;height:24px;line-height:24px">Build intensity graph for current string</div>
<div class="t" style="left:475px;top:527px;">50</div>
<div class="t" style="left:478px;top:586px;">0</div>
<div class="a" style="left:497px;top:528px;width:15px;height:73px;background:#fff;box-shadow:inset 1px 1px #808080,inset 2px 2px #000,inset -1px -1px #fff,inset -2px -2px #dfdfdf"></div>
<svg class="a" style="left:492px;top:564px" width="23" height="11" viewBox="0 0 23 11">
<path d="M0 5.5 L5.5 0 H23 V11 H5.5 Z" fill="#c0c0c0"/>
<path d="M0.5 5.5 L5.5 0.5 H22" stroke="#fff" stroke-width="1" fill="none"/>
<path d="M5.5 1.5 H21" stroke="#dfdfdf" stroke-width="1" fill="none"/>
<path d="M21.5 1 V9.5 H5.5" stroke="#808080" stroke-width="1" fill="none"/>
<path d="M22.5 0 V10.5 H5.5 L0.5 5.5" stroke="#000" stroke-width="1" fill="none"/>
</svg>
<div class="btn" style="left:526px;top:529px;width:88px;height:15px;line-height:15px">Small step up</div>
<div class="t" style="left:523px;top:556px;">String for graph</div>
<div class="btn" style="left:528px;top:585px;width:88px;height:15px;line-height:15px">Small step down</div>
<div class="t" style="left:624px;top:529px;">Visualiz. fps</div>
<div class="t" style="left:658px;top:550px;">max</div>
<div class="t" style="left:662px;top:581px;">min</div>
<div class="a" style="left:630px;top:560px;width:4px;height:36px;background:linear-gradient(90deg,#808080 0 1px,#000 1px 2px,#fff 2px 3px,#e4e4e4 3px 4px)"></div>
<svg class="a" style="left:623px;top:550px" width="22" height="11" viewBox="0 0 22 11">
<path d="M0 0 H16.5 L22 5.5 L16.5 11 H0 Z" fill="#c0c0c0"/>
<path d="M0.5 10 V0.5 H16.5 L21.5 5.5" stroke="#fff" stroke-width="1" fill="none"/>
<path d="M1.5 9 V1.5 H15.5" stroke="#dfdfdf" stroke-width="1" fill="none"/>
<path d="M1 9.5 H16.0 L20.5 5.5" stroke="#808080" stroke-width="1" fill="none"/>
<path d="M0 10.5 H16.5 L21.5 5.5" stroke="#000" stroke-width="1" fill="none"/>
</svg>
<div class="btn" style="left:474px;top:619px;width:207px;height:24px;line-height:24px">Connect to spot</div>
<div class="t" style="left:488px;top:647px;">Coord Y</div>
<div class="t" style="left:584px;top:646px;">Level</div>
<div class="a" style="left:496px;top:666px;width:30px;height:81px;border:1px dotted #303030"></div>
<div class="a" style="left:507px;top:674px;width:4px;height:65px;background:linear-gradient(90deg,#808080 0 1px,#000 1px 2px,#fff 2px 3px,#e4e4e4 3px 4px)"></div>
<svg class="a" style="left:498px;top:684px" width="21" height="11" viewBox="0 0 21 11">
<path d="M0 5.5 L5.5 0 H21 V11 H5.5 Z" fill="#c0c0c0"/>
<path d="M0.5 5.5 L5.5 0.5 H20" stroke="#fff" stroke-width="1" fill="none"/>
<path d="M5.5 1.5 H19" stroke="#dfdfdf" stroke-width="1" fill="none"/>
<path d="M19.5 1 V9.5 H5.5" stroke="#808080" stroke-width="1" fill="none"/>
<path d="M20.5 0 V10.5 H5.5 L0.5 5.5" stroke="#000" stroke-width="1" fill="none"/>
</svg>
<div class="t" style="left:475px;top:672px;">240</div>
<div class="t" style="left:481px;top:729px;">0</div>
<div class="a" style="left:550px;top:670px;width:121px;height:4px;background:linear-gradient(#808080 0 1px,#000 1px 2px,#fff 2px 3px,#e4e4e4 3px 4px)"></div>
<svg class="a" style="left:592px;top:663px" width="11" height="21" viewBox="0 0 11 21">
<path d="M0 0 H11 V15.5 L5.5 21 L0 15.5 Z" fill="#c0c0c0"/>
<path d="M0.5 15.5 V0.5 H10" stroke="#fff" stroke-width="1" fill="none"/>
<path d="M1.5 15.0 V1.5 H9" stroke="#dfdfdf" stroke-width="1" fill="none"/>
<path d="M0.5 15.5 L5.5 20.5" stroke="#fff" stroke-width="1" fill="none"/>
<path d="M9.5 1 V15.0 L5.5 19" stroke="#808080" stroke-width="1" fill="none"/>
<path d="M10.5 0 V15.5 L5.5 20.5" stroke="#000" stroke-width="1" fill="none"/>
</svg>
<div class="t" style="left:550px;top:690px;">0</div>
<div class="t" style="left:583px;top:693px;">Coord X</div>
<div class="t" style="left:650px;top:690px;">255</div>
<div class="a" style="left:542px;top:720px;width:130px;height:4px;background:linear-gradient(#808080 0 1px,#000 1px 2px,#fff 2px 3px,#e4e4e4 3px 4px)"></div>
<svg class="a" style="left:654px;top:713px" width="11" height="21" viewBox="0 0 11 21">
<path d="M0 0 H11 V15.5 L5.5 21 L0 15.5 Z" fill="#c0c0c0"/>
<path d="M0.5 15.5 V0.5 H10" stroke="#fff" stroke-width="1" fill="none"/>
<path d="M1.5 15.0 V1.5 H9" stroke="#dfdfdf" stroke-width="1" fill="none"/>
<path d="M0.5 15.5 L5.5 20.5" stroke="#fff" stroke-width="1" fill="none"/>
<path d="M9.5 1 V15.0 L5.5 19" stroke="#808080" stroke-width="1" fill="none"/>
<path d="M10.5 0 V15.5 L5.5 20.5" stroke="#000" stroke-width="1" fill="none"/>
</svg>
<div class="t" style="left:544px;top:740px;">0</div>
<div class="t" style="left:652px;top:741px;">320</div>
<div class="a" style="left:0;top:862px;width:1152px;height:1px;background:#006c6c"></div><div class="a" style="left:0;top:863px;width:1152px;height:1px;background:#e8f8f8"></div>
</body></html>
